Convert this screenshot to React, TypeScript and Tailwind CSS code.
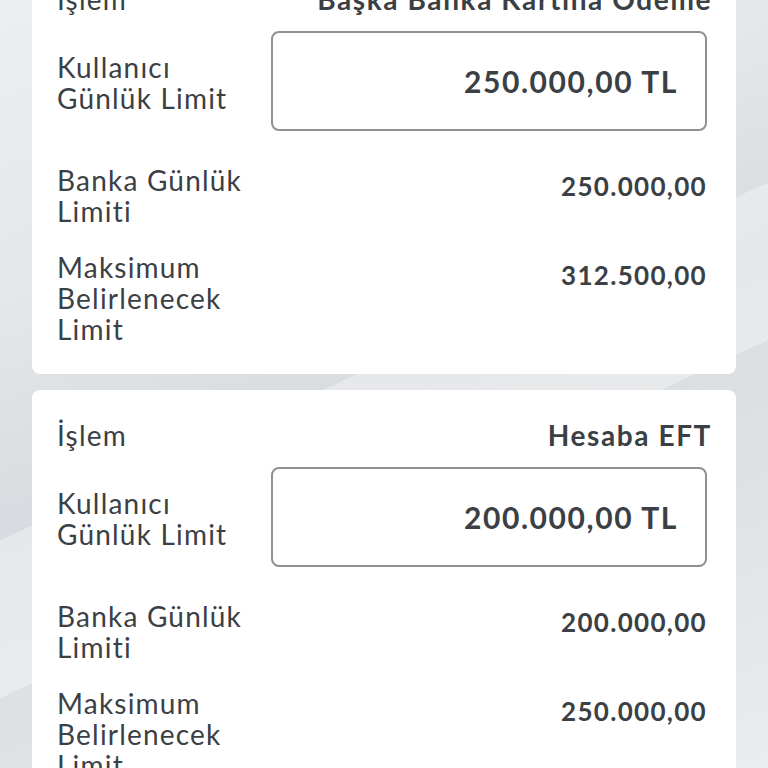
import React from 'react';

type Limit = {
  islem: string;
  kullanici: string;
  banka: string;
  maksimum: string;
};

const limits: Limit[] = [
  { islem: 'Başka Banka Kartına Ödeme', kullanici: '250.000,00 TL', banka: '250.000,00', maksimum: '312.500,00' },
  { islem: 'Hesaba EFT', kullanici: '200.000,00 TL', banka: '200.000,00', maksimum: '250.000,00' },
];

function LimitCard({ item, first }: { item: Limit; first?: boolean }) {
  return (
    <div
      className={`bg-white rounded-lg pl-[25px] pr-[29px] pt-[30px] pb-[29px] ${first ? 'mt-[-46px]' : ''}`}
    >
      {/* İşlem */}
      <div className="flex justify-between items-center h-[31px]">
        <span className="text-[28px] leading-[31px] tracking-[1.2px]">İşlem</span>
        <span className="text-[28px] leading-[31px] font-bold tracking-[1.6px] mr-[-5px]">{item.islem}</span>
      </div>

      {/* Kullanıcı günlük limit */}
      <div className="flex items-center mt-4">
        <div className="w-[214px] shrink-0 text-[28px] leading-[31px] tracking-[1.2px] pt-[4px]">
          Kullanıcı
          <br />
          Günlük Limit
        </div>
        <div className="flex-1 h-[100px] border-2 border-[#8e9194] rounded-lg flex items-center justify-end pr-[27px]">
          <span className="text-[30px] font-bold tracking-[1.6px]">{item.kullanici}</span>
        </div>
      </div>

      {/* Banka günlük limiti */}
      <div className="flex justify-between items-start mt-[34px]">
        <div className="text-[28px] leading-[31px] tracking-[1.2px]">
          Banka Günlük
          <br />
          Limiti
        </div>
        <span className="text-[26px] leading-[31px] font-bold tracking-[1.3px] mt-[6px]">{item.banka}</span>
      </div>

      {/* Maksimum belirlenecek limit */}
      <div className="flex justify-between items-start mt-[25px]">
        <div className="text-[28px] leading-[31px] tracking-[1.2px]">
          Maksimum
          <br />
          Belirlenecek
          <br />
          Limit
        </div>
        <span className="text-[26px] leading-[31px] font-bold tracking-[1.3px] mt-[8px]">{item.maksimum}</span>
      </div>
    </div>
  );
}

export default function App() {
  return (
    <div
      className="h-[768px] overflow-hidden px-8 text-[#3b4045] bg-[linear-gradient(155deg,transparent_0%,transparent_48%,rgba(255,255,255,0.35)_48%,rgba(255,255,255,0.35)_62%,transparent_62%),linear-gradient(160deg,#eceef0_0%,#e4e6e9_30%,#d8dbdf_50%,#dfe2e5_72%,#eaecee_100%)]"
      style={{ fontFamily: 'Lato, "Open Sans", sans-serif' }}
    >
      <div className="flex flex-col gap-4">
        {limits.map((l, i) => (
          <LimitCard key={l.islem} item={l} first={i === 0} />
        ))}
      </div>
    </div>
  );
}
